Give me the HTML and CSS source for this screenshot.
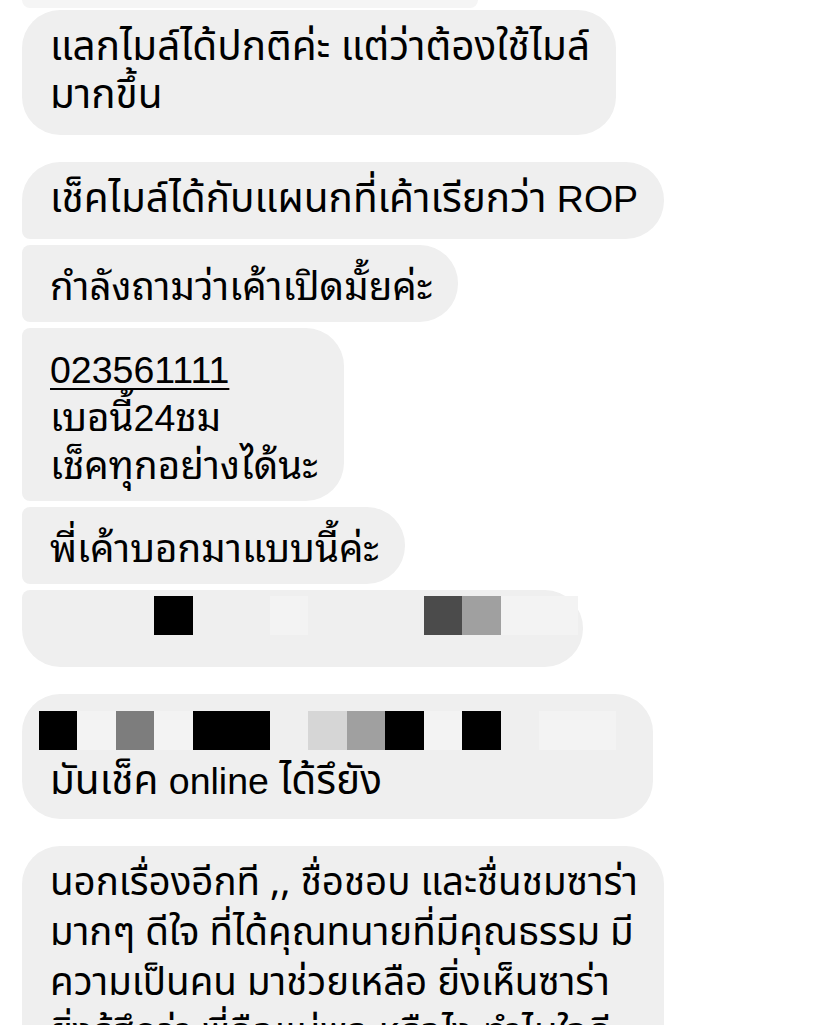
FILE: index.html
```html
<!DOCTYPE html>
<html lang="th">
  <head>
    <meta charset="UTF-8" />
    <meta name="viewport" content="width=device-width, initial-scale=1.0" />
    <title>แชท</title>
    <link rel="stylesheet" href="styles.css">
  </head>
  <body>
    <div class="thread">
      <div class="bubble bubble-tail"></div>

      <div class="group">
        <div class="bubble narrow">แลกไมล์ได้ปกติค่ะ แต่ว่าต้องใช้ไมล์<br />มากขึ้น</div>
      </div>

      <div class="group">
        <div class="bubble narrow">เช็คไมล์ได้กับแผนกที่เค้าเรียกว่า<span class="latin"> ROP</span></div>
        <div class="bubble">กำลังถามว่าเค้าเปิดมั้ยค่ะ</div>
        <div class="bubble">
          <span class="latin phone">023561111</span><br />
          เบอนี้<span class="latin">24</span>ชม<br />
          เช็คทุกอย่างได้นะ
        </div>
        <div class="bubble">พี่เค้าบอกมาแบบนี้ค่ะ</div>
        <div class="bubble censored censored-short">
          <div class="mosaic">
            <span></span><span></span><span></span><span class="c-black"></span>
            <span></span><span></span><span class="c-faint"></span><span></span>
            <span></span><span></span><span class="c-dark"></span><span class="c-mid"></span>
            <span class="c-faint"></span><span class="c-faint"></span>
          </div>
        </div>
      </div>

      <div class="group">
        <div class="bubble narrow censored censored-long">
          <div class="mosaic">
            <span class="c-black"></span><span class="c-faint"></span><span class="c-grey"></span><span class="c-faint"></span>
            <span class="c-black"></span><span class="c-black"></span><span></span><span class="c-light"></span>
            <span class="c-mid"></span><span class="c-black"></span><span class="c-faint"></span><span class="c-black"></span>
            <span></span><span class="c-faint"></span><span class="c-faint"></span>
          </div>
          มันเช็ค <span class="latin">online</span> ได้รึยัง
        </div>
      </div>

      <div class="group">
        <div class="bubble narrow long-text">
          นอกเรื่องอีกที ,, ชื่อชอบ และชื่นชมซาร่า<br />
          มากๆ ดีใจ ที่ได้คุณทนายที่มีคุณธรรม มี<br />
          ความเป็นคน มาช่วยเหลือ ยิ่งเห็นซาร่า<br />
          ยิ่งรู้สึกว่า พี่คือแม่พระหรือไง ทำไมใจดี
        </div>
      </div>
    </div>
  </body>
</html>
```

FILE: styles.css
```css
body {
  margin: 0;
  background: #fff;
  color: #000;
  font-family: "Noto Sans Thai Looped", "Noto Sans Thai", "Liberation Sans", sans-serif;
}
.thread {
  display: flex;
  flex-direction: column;
  align-items: flex-start;
  padding-left: 22px;
}
.group {
  display: flex;
  flex-direction: column;
  align-items: flex-start;
  gap: 6px;
  margin-bottom: 27px;
}
.bubble {
  box-sizing: border-box;
  background: #efefef;
  border-radius: 38px;
  padding: 14px 26px 15px 28px;
  font-size: 38.5px;
  line-height: 48px;
  white-space: nowrap;
}
.group .bubble:not(:first-child) {
  border-top-left-radius: 8px;
}
.group .bubble:not(:last-child) {
  border-bottom-left-radius: 8px;
}
.narrow {
  font-family: "Noto Sans Thai", "Liberation Sans", sans-serif;
  font-size: 40.5px;
}
.long-text {
  font-size: 38.5px;
  line-height: 50px;
  padding-top: 12px;
}
.latin {
  font-family: "Liberation Sans", sans-serif;
  font-size: 37.5px;
  line-height: 1;
}
.bubble-tail {
  width: 456px;
  height: 8px;
  padding: 0;
  margin-bottom: 2px;
  background: #f5f5f5;
  border-radius: 0 0 30px 30px;
}
.phone {
  text-decoration: underline;
  text-decoration-thickness: 2px;
  text-underline-offset: 5px;
}
.censored-short {
  width: 561px;
  height: 77px;
  padding-top: 6px;
}
.censored-long {
  width: 631px;
  padding-top: 17px;
  padding-bottom: 13px;
}
.mosaic {
  display: flex;
  height: 39px;
  margin-left: -11.5px;
}
.censored-long .mosaic {
  margin-bottom: 8px;
}
.mosaic span {
  width: 38.5px;
  flex: none;
}
.mosaic .c-black { background: #000; }
.mosaic .c-dark { background: #4b4b4b; }
.mosaic .c-grey { background: #7d7d7d; }
.mosaic .c-mid { background: #a0a0a0; }
.mosaic .c-light { background: #d6d6d6; }
.mosaic .c-faint { background: #f3f3f3; }
```
